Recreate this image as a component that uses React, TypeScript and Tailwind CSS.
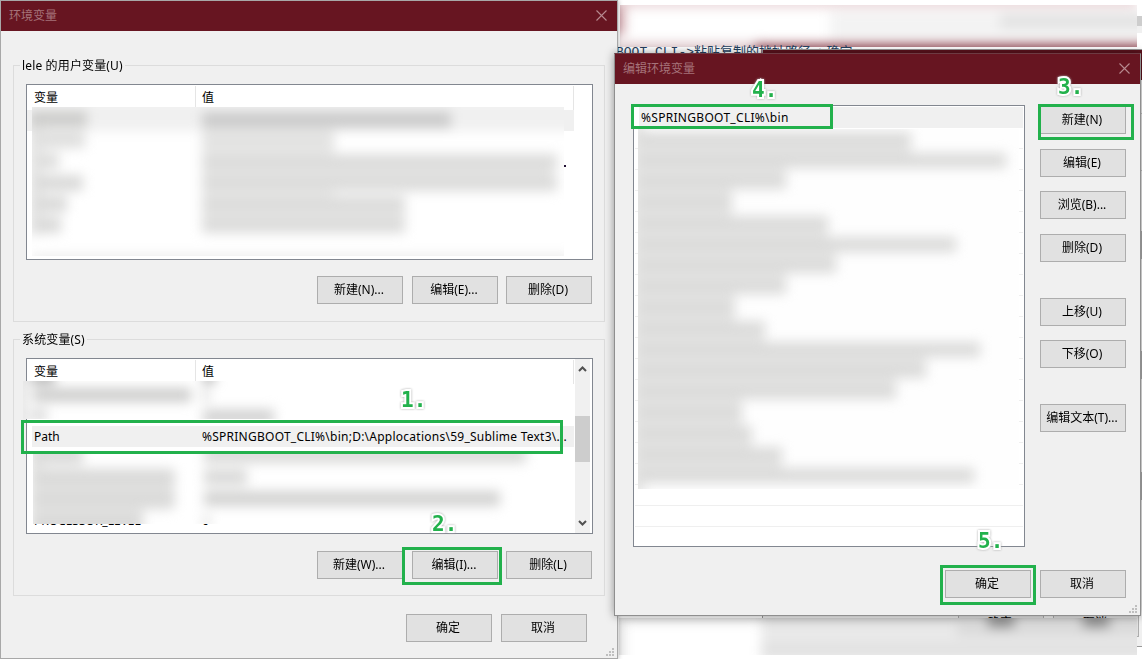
import React from "react";

type Bar = { x: number; y: number; w: number; c?: string; h?: number };

function Redacted({ bars, className, blur = "blur-[6px]" }: { bars: Bar[]; className: string; blur?: string }) {
  return (
    <div className={"absolute overflow-hidden " + className}>
      <div className={"absolute inset-0 " + blur}>
        {bars.map((b, i) => (
          <div
            key={i}
            className="absolute"
            style={{ left: b.x, top: b.y, width: b.w, height: b.h ?? 16, background: b.c ?? "#dadad9" }}
          />
        ))}
      </div>
    </div>
  );
}

function Button({ children, className = "" }: { children: React.ReactNode; className?: string }) {
  return (
    <button
      className={
        "h-[28px] w-[86px] shrink-0 whitespace-nowrap border border-[#adadad] bg-[#e1e1e1] pr-[2px] text-center leading-[26px] " +
        className
      }
    >
      {children}
    </button>
  );
}

function TitleBar({ title }: { title: string }) {
  return (
    <div className="flex h-[30px] items-center justify-between bg-[#671521] pl-2 pr-[10px] text-[#a5737a]">
      <span className="pb-px leading-4">{title}</span>
      <svg className="-mt-px" width="11" height="11" viewBox="0 0 11 11" fill="none" stroke="#b78a90" strokeWidth="1.1">
        <path d="M0.5 0.5 L10.5 10.5 M10.5 0.5 L0.5 10.5" />
      </svg>
    </div>
  );
}

function Grip({ className }: { className: string }) {
  return (
    <svg className={"absolute " + className} width="8" height="8" fill="#bfbfbf">
      <path d="M6 0h2v2h-2z M3 3h2v2h-2z M6 3h2v2h-2z M0 6h2v2h-2z M3 6h2v2h-2z M6 6h2v2h-2z" />
    </svg>
  );
}

function Group({ label, children, className = "" }: { label: string; children: React.ReactNode; className?: string }) {
  return (
    <section className={"relative ml-[12px] h-[257px] w-[592px] border border-[#dcdcdc] px-[12px] pt-[18px] " + className}>
      <span className="absolute -top-[8px] left-[6px] bg-[#f0f0f0] px-[2px] leading-4 tracking-[0.15px]">{label}</span>
      {children}
    </section>
  );
}

function ListHeader({ right }: { right: string }) {
  return (
    <div className="flex h-[25px] pt-px leading-[24px]">
      <span className="w-[169px] border-r border-[#e5e5e5] pl-[7px]">变量</span>
      <span className={"border-r border-[#e5e5e5] pl-[6px] " + right}>值</span>
    </div>
  );
}

function Step({ n, className }: { n: string; className: string }) {
  return (
    <div
      className={
        "absolute font-['DejaVu_Sans_Mono',monospace] text-[21px] font-bold leading-5 text-[#22b14c] drop-shadow-[0_0_1px_#aaa] [-webkit-text-stroke:4px_white] [paint-order:stroke_fill] [stroke-linejoin:round] " +
        className
      }
    >
      {n}
    </div>
  );
}

function Highlight({ className }: { className: string }) {
  return <div className={"pointer-events-none absolute border-[3px] border-[#22b14c] " + className} />;
}

const userBars: Bar[] = [
  { x: -9, y: -8, w: 560, h: 32, c: "#f0f0f0" },
  { x: -3, y: 4, w: 58, c: "#cdcdcb" },
  { x: -3, y: 20, w: 12, h: 108, c: "#e4e4e3" },
  { x: 3, y: 25, w: 50, c: "#dfdfde" },
  { x: 3, y: 46, w: 24, c: "#dededd" },
  { x: 3, y: 68, w: 48 },
  { x: 3, y: 89, w: 32 },
  { x: 3, y: 110, w: 26 },
  { x: 170, y: 20, w: 132, h: 104, c: "#ebebea" },
  { x: 170, y: 52, w: 350, h: 30, c: "#e8e8e7" },
  { x: 170, y: 96, w: 203, h: 28, c: "#e8e8e7" },
  { x: 170, y: 5, w: 249, c: "#cbcbcb" },
  { x: 170, y: 26, w: 132, c: "#e2e2e1" },
  { x: 170, y: 47, w: 355, c: "#dcdcdb" },
  { x: 170, y: 68, w: 355, c: "#dcdcdb" },
  { x: 170, y: 89, w: 203, c: "#dcdcdb" },
  { x: 170, y: 110, w: 203, c: "#dcdcdb" },
  { x: 0, y: 147, w: 540, h: 14, c: "#eeeeee" },
];

const topBars: Bar[] = [
  { x: -10, y: -10, w: 14, h: 160, c: "#e5e5e5" },
  { x: 8, y: -8, w: 24, h: 10, c: "#aaa" },
  { x: 180, y: -8, w: 12, h: 10, c: "#aaa" },
  { x: 10, y: 7, w: 158, h: 14, c: "#cececd" },
  { x: 180, y: 7, w: 6, h: 14 },
  { x: 8, y: 28, w: 16, h: 12, c: "#dadada" },
  { x: 180, y: 28, w: 71, h: 16, c: "#d4d4d4" },
];

const lowerBars: Bar[] = [
  { x: -3, y: -8, w: 12, h: 90, c: "#e2e2e1" },
  { x: 0, y: 15, w: 140, h: 42, c: "#e6e6e5" },
  { x: 0, y: 56, w: 110, h: 24, c: "#e4e4e3" },
  { x: 0, y: -6, w: 50, h: 17 },
  { x: 0, y: 17, w: 142 },
  { x: 0, y: 38, w: 142 },
  { x: 0, y: 60, w: 110, h: 20 },
  { x: 171, y: -6, w: 322, h: 16 },
  { x: 171, y: 16, w: 43, h: 16 },
  { x: 171, y: 38, w: 296, h: 15, c: "#d3d3d2" },
  { x: 171, y: 61, w: 5, h: 16 },
];

const pathWidths = [273, 368, 148, 94, 190, 318, 198, 148, 97, 127, 342, 288, 258, 104, 114, 144, 336];
const pathBars: Bar[] = [
  { x: -8, y: -8, w: 14, h: 376, c: "#e4e4e3" },
  ...pathWidths.slice(1).map((w, i) => ({
    x: 0,
    y: 10 + i * 21,
    w: Math.min(w, pathWidths[i]),
    h: 22,
    c: "#e7e7e6",
  })),
  ...pathWidths.map((w, i) => ({ x: 0, y: 3 + i * 21, w, h: 15, c: "#dbdbda" })),
];

const blankRows = Array.from({ length: 19 });

export default function App() {
  return (
    <div className="relative h-[659px] w-[1142px] overflow-hidden bg-white font-['Noto_Sans','Noto_Sans_CJK_SC',sans-serif] text-[12px] text-black">
      {/* Page and windows further back */}
      <Redacted
        className="left-[620px] top-[5px] h-[42px] w-[517px]"
        bars={[
          { x: 0, y: -10, w: 517, h: 12, c: "#e8d2d5" },
          { x: -10, y: 0, w: 14, h: 30, c: "#c9989f" },
          { x: 210, y: 6, w: 330, h: 30, c: "#f3f3f3" },
          { x: 380, y: 9, w: 160, h: 14, c: "#e2e2e2" },
          { x: -5, y: 38, w: 150, h: 12, c: "#dcc4c8" },
          { x: 135, y: 39, w: 400, h: 14, c: "#8f4450" },
        ]}
      />
      <div className="absolute left-[1137px] top-[16px] h-[10px] w-[5px] bg-[#cdcdcd]" />
      <div className="absolute left-[1137px] top-[26px] h-[7px] w-[5px] bg-[#f0f0f0]" />
      <div className="absolute left-[616px] top-[46px] whitespace-nowrap font-['Liberation_Mono','Noto_Sans_CJK_SC',monospace] text-[13px] leading-[14px] text-[#24415f]">
        BOOT_CLI-&gt;粘贴复制的地址路径-&gt;确定
      </div>
      <div className="absolute left-[762px] top-[49px] h-[598px] w-[390px] border border-[#999] bg-[#f0f0f0]">
        <div className="h-[30px] bg-[#5c121d]" />
        <div className="flex flex-col items-end pr-[9px] pt-[33px] leading-[28px]">
          <div className="h-[58px] w-full border-y border-[#c4c4c4]" />
          <div className="mt-[60px] h-[28px] w-full overflow-hidden border border-[#adadad] bg-[#e1e1e1]" />
          <div className="mt-[92px] h-[28px] w-full border border-[#adadad] bg-[#e1e1e1]" />
          <div className="mt-[93px] h-[28px] w-full border border-[#adadad] bg-[#e1e1e1]" />
        </div>
      </div>
      <div className="absolute left-[958px] top-[609px] flex gap-[9px]">
        <Button>确定</Button>
        <Button>取消</Button>
      </div>
      <div className="absolute left-[618px] top-[618px] h-[41px] w-[519px] bg-white" />
      <Redacted
        className="left-[619px] top-[618px] h-[37px] w-[518px]"
        bars={[
          { x: -8, y: -8, w: 12, h: 60, c: "#ddd" },
          { x: 0, y: -9, w: 540, h: 12, c: "#d4d4d4" },
          { x: 142, y: 0, w: 400, h: 44, c: "#e9e9e9" },
          { x: 142, y: 27, w: 400, h: 9, c: "#dfdfdf" },
          { x: 142, y: -9, w: 400, h: 12, c: "#c8c8c8" },
          { x: 338, y: 0, w: 200, h: 18, c: "#dadada" },
          { x: 369, y: -5, w: 26, h: 14, c: "#8a8a8a" },
          { x: 464, y: -5, w: 26, h: 14, c: "#8a8a8a" },
        ]}
      />

      {/* Environment variables window */}
      <main className="absolute left-0 top-0 h-[659px] w-[618px] border border-[#a8a8a8] bg-[#f0f0f0] shadow-[0_0_5px_#0005]">
        <TitleBar title="环境变量" />
        <Group label="lele 的用户变量(U)" className="mt-[34px]">
          <div className="relative h-[176px] w-[567px] border border-[#828790] bg-white">
            <ListHeader right="w-[378px]" />
            <div className="h-[21px] w-[547px] bg-[#f0f0f0]" />
            <div className="absolute left-[5px] top-[22px] h-[149px] w-[532px] bg-white" />
            <Redacted className="left-[5px] top-[22px] h-[149px] w-[532px]" bars={userBars} />
            <div className="absolute left-[537px] top-[80px] h-[2px] w-[2px] bg-[#213]" />
          </div>
          <div className="mt-4 flex justify-end">
            <Button className="mr-[9px]">新建(N)...</Button>
            <Button className="mr-[8px]">编辑(E)...</Button>
            <Button>删除(D)</Button>
          </div>
        </Group>

        <Group label="系统变量(S)" className="mt-[17px]">
          <div className="relative flex h-[176px] w-[567px] justify-between border border-[#828790] bg-white pr-[2px]">
            <div className="w-[547px]">
              <ListHeader right="w-[378px]" />
              <div className="mt-[42px] ml-[5px] flex h-[21px] w-[542px] whitespace-nowrap bg-[#f0f0f0] leading-[21px]">
                <span className="w-[170px] pl-[2px]">Path</span>
                <span className="tracking-[0.25px]">%SPRINGBOOT_CLI%\bin;D:\Applocations\59_Sublime Text3\...</span>
              </div>
              <div className="ml-[7px] mt-[65px] flex h-[16px] items-end leading-[14px]">
                <span className="w-[168px]">PROCESSOR_LEVEL</span>
                <span>6</span>
              </div>
            </div>
            <div className="flex w-[15px] flex-col items-center bg-[#f0f0f0] py-[6px]">
              <svg width="9" height="8" fill="none" stroke="#505050" strokeWidth="2"><path d="M1 6 L4.5 2.5 L8 6" /></svg>
              <div className="mt-[43px] h-[46px] w-[15px] bg-[#cdcdcd]" />
              <svg className="mt-auto" width="9" height="8" fill="none" stroke="#505050" strokeWidth="2"><path d="M1 2 L4.5 5.5 L8 2" /></svg>
            </div>
            <div className="absolute -left-[4px] top-[22px] h-[38px] w-[542px] bg-white" />
            <Redacted className="-left-[4px] top-[22px] h-[38px] w-[542px]" bars={topBars} />
            <div className="absolute left-[6px] top-[94px] h-[71px] w-[534px] bg-white" />
            <Redacted className="left-[6px] top-[94px] h-[71px] w-[534px]" bars={lowerBars} />
          </div>
          <div className="mt-[17px] flex justify-end">
            <Button className="mr-[9px]">新建(W)...</Button>
            <Button className="mr-[8px]">编辑(I)...</Button>
            <Button>删除(L)</Button>
          </div>
        </Group>
        <div className="mt-[18px] flex justify-end gap-[9px] pr-[30px]">
          <Button>确定</Button>
          <Button>取消</Button>
        </div>
        <Grip className="bottom-[2px] right-[3px]" />
      </main>

      {/* Edit environment variable window */}
      <section className="absolute left-[614px] top-[53px] h-[563px] w-[527px] border border-[#8f8f8f] border-t-[#6d3a42] bg-[#f0f0f0] shadow-[0_0_9px_#0006]">
        <TitleBar title="编辑环境变量" />
        <div className="flex pl-[18px] pt-[21px]">
          <div className="relative h-[442px] w-[392px] border border-[#828790] bg-white pl-px pr-px pt-px">
            <div className="ml-[4px] h-[21px] bg-[#f0f0f0] pl-[2px] leading-[22px] tracking-[0.3px]">%SPRINGBOOT_CLI%\bin</div>
            {blankRows.map((_, i) => (
              <div key={i} className="h-[21px] border-b border-[#efefef]" />
            ))}
            <div className="absolute left-[4px] top-[23px] h-[360px] w-[381px] bg-[#fefefe]" />
            <Redacted className="left-[4px] top-[23px] h-[360px] w-[381px]" bars={pathBars} />
          </div>
          <div className="ml-[15px] flex flex-col pt-px">
            <Button>新建(N)</Button>
            <Button className="mt-[15px]">编辑(E)</Button>
            <Button className="mt-[14px]">浏览(B)...</Button>
            <Button className="mt-[15px]">删除(D)</Button>
            <Button className="mt-[36px]">上移(U)</Button>
            <Button className="mt-[14px]">下移(O)</Button>
            <Button className="mt-[36px]">编辑文本(T)...</Button>
          </div>
        </div>
        <div className="mt-[23px] flex justify-end gap-[9px] pr-[14px]">
          <Button>确定</Button>
          <Button>取消</Button>
        </div>
        <Grip className="bottom-[2px] right-[3px]" />
      </section>

      {/* Annotations */}
      <Highlight className="left-[21px] top-[420px] h-[34px] w-[542px]" />
      <Highlight className="left-[402px] top-[547px] h-[38px] w-[100px]" />
      <Highlight className="left-[1038px] top-[104px] h-[36px] w-[96px]" />
      <Highlight className="left-[631px] top-[104px] h-[25px] w-[202px]" />
      <Highlight className="left-[940px] top-[565px] h-[40px] w-[96px]" />
      <Step n="1." className="left-[401px] top-[390px]" />
      <Step n="2." className="left-[432px] top-[514px]" />
      <Step n="3." className="left-[1058px] top-[77px]" />
      <Step n="4." className="left-[752px] top-[80px]" />
      <Step n="5." className="left-[978px] top-[531px]" />
    </div>
  );
}
